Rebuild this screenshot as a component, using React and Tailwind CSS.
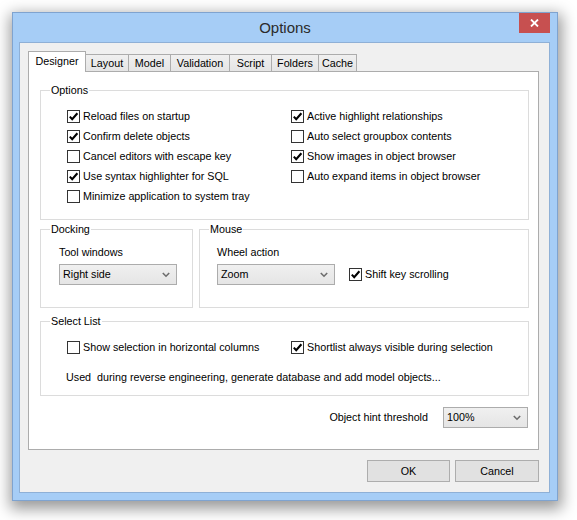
import React from "react";

function Box({ checked }) {
  return (
    <span className="w-[13px] h-[13px] border border-[#333333] bg-white flex items-center justify-center shrink-0">
      {checked && (
        <svg width="11" height="11" viewBox="0 0 11 11">
          <path d="M1.8 5.6 L4.2 8.2 L9.4 2.2" stroke="#000" strokeWidth="2.1" fill="none" />
        </svg>
      )}
    </span>
  );
}

function Check({ checked, label }) {
  return (
    <div className="flex items-center h-[20px]">
      <Box checked={checked} />
      <span className="ml-[3px] whitespace-nowrap">{label}</span>
    </div>
  );
}

function Group({ label, className, children }) {
  return (
    <div className={"relative border border-[#dcdcdc] " + className}>
      <span className="absolute left-[9px] -top-[8px] bg-white px-[1px] leading-[14px]">{label}</span>
      {children}
    </div>
  );
}

function Select({ value, className }) {
  return (
    <div className={"h-[21px] border border-[#acacac] bg-gradient-to-b from-[#f0f0f0] to-[#e5e5e5] flex items-center justify-between pl-[3px] pr-[6px] " + className}>
      <span>{value}</span>
      <svg width="8" height="6" viewBox="0 0 8 6">
        <path d="M0.8 1 L4 4.2 L7.2 1" stroke="#6d6d6d" strokeWidth="1.6" fill="none" />
      </svg>
    </div>
  );
}

const tabs = [
  ["Layout", "w-[43px]"],
  ["Model", "w-[42px]"],
  ["Validation", "w-[59px]"],
  ["Script", "w-[42px]"],
  ["Folders", "w-[47px]"],
  ["Cache", "w-[38px]"],
];

export default function App() {
  return (
    <div className="w-[577px] h-[520px] bg-white overflow-hidden pt-[12px] pl-[12px] font-['Liberation_Sans',Arial,sans-serif] text-[10.75px] text-black">
      <div className="w-[546px] h-[489px] border border-[#7fa3cf] bg-[#a6cdf6] flex flex-col shadow-[1px_5px_14px_3px_rgba(0,0,0,0.4)]">
        <div className="relative h-[29px] flex items-center justify-center">
          <span className="text-[15px] text-[#2b2b2b] leading-none mt-[-1px]">Options</span>
          <div className="absolute right-[7px] top-0 w-[31px] h-[20px] bg-[#c75050] flex items-center justify-center">
            <svg width="9" height="8" viewBox="0 0 9 8">
              <path d="M1 0.5 L8 7.5 M8 0.5 L1 7.5" stroke="#fff" strokeWidth="1.8" />
            </svg>
          </div>
        </div>
        <div className="ml-[6px] w-[531px] h-[451px] border border-[#8fb0d6] bg-[#f0f0f0] pt-[8px] pl-[8px] pr-[10px] flex flex-col">
          <div className="flex items-end h-[20px]">
            <div className="relative z-10 w-[58px] h-[21px] -mb-[1px] bg-white border-l border-t border-r border-[#acacac] flex items-start justify-center pt-[2px] leading-[14px]">
              Designer
            </div>
            {tabs.map(([t, w]) => (
              <div
                key={t}
                className={w + " h-[17px] border-t border-r border-[#acacac] bg-gradient-to-b from-[#f0f0f0] to-[#e5e5e5] flex items-center justify-center leading-[14px]"}
              >
                {t}
              </div>
            ))}
          </div>
          <div className="w-[511px] h-[379px] border border-[#acacac] bg-white pl-[11px] pr-[9px] pt-[18px] flex flex-col">
            <Group label="Options" className="h-[130px] pt-[15px] pl-[26px]">
              <div className="flex">
                <div className="w-[224px]">
                  <Check checked label="Reload files on startup" />
                  <Check checked label="Confirm delete objects" />
                  <Check label="Cancel editors with escape key" />
                  <Check checked label="Use syntax highlighter for SQL" />
                  <Check label="Minimize application to system tray" />
                </div>
                <div>
                  <Check checked label="Active highlight relationships" />
                  <Check label="Auto select groupbox contents" />
                  <Check checked label="Show images in object browser" />
                  <Check label="Auto expand items in object browser" />
                </div>
              </div>
            </Group>
            <div className="flex mt-[9px] gap-[6px]">
              <Group label="Docking" className="w-[153px] h-[79px] pt-[15px] pl-[18px]">
                <div className="leading-[14px]">Tool windows</div>
                <Select value="Right side" className="w-[118px] mt-[5px]" />
              </Group>
              <Group label="Mouse" className="flex-1 h-[79px] pt-[15px] pl-[17px]">
                <div className="leading-[14px]">Wheel action</div>
                <div className="flex items-center mt-[5px]">
                  <Select value="Zoom" className="w-[118px]" />
                  <div className="ml-[14px]">
                    <Check checked label="Shift key scrolling" />
                  </div>
                </div>
              </Group>
            </div>
            <Group label="Select List" className="mt-[13px] h-[75px] pt-[15px] pl-[26px]">
              <div className="flex">
                <div className="w-[224px]">
                  <Check label="Show selection in horizontal columns" />
                </div>
                <Check checked label="Shortlist always visible during selection" />
              </div>
              <div className="mt-[13px] -ml-[1px] leading-[14px] whitespace-pre">
                {"Used  during reverse engineering, generate database and add model objects..."}
              </div>
            </Group>
            <div className="mt-[11px] flex items-center justify-end pr-[1px]">
              <span>Object hint threshold</span>
              <Select value="100%" className="w-[85px] ml-[15px]" />
            </div>
          </div>
          <div className="mt-[10px] flex justify-end gap-[5px]">
            <div className="w-[83px] h-[22px] border border-[#adadad] bg-[#e1e1e1] flex items-center justify-center">OK</div>
            <div className="w-[84px] h-[22px] border border-[#adadad] bg-[#e1e1e1] flex items-center justify-center">Cancel</div>
          </div>
        </div>
      </div>
    </div>
  );
}
